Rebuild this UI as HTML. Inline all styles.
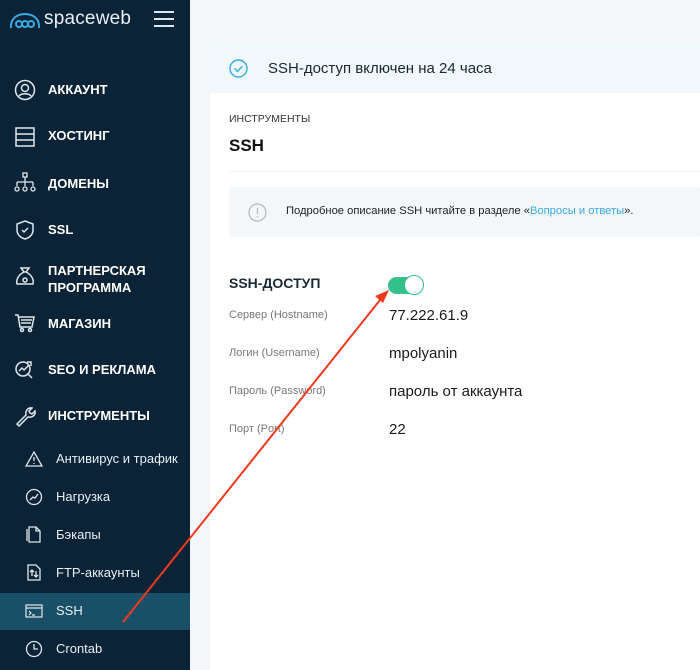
<!DOCTYPE html>
<html><head><meta charset="utf-8"><style>
*{margin:0;padding:0;box-sizing:border-box}
body{width:700px;height:670px;overflow:hidden;font-family:"Liberation Sans",sans-serif;background:#f3f7f9;position:relative}
#sb{position:absolute;left:0;top:0;width:190px;height:670px;background:#0b2336;color:#fff}
.logo{position:absolute;left:9px;top:8px;font-size:19px;color:#e8eef3;letter-spacing:0.2px}
.ham{position:absolute;left:154px;top:11px;width:20px}
.ham i{display:block;height:2px;background:#dfe6ec;margin-bottom:5px}
.it{position:absolute;left:48px;font-size:13px;font-weight:bold;line-height:17px}
.ic{position:absolute;left:14px;width:22px;height:22px}
.sub{position:absolute;left:56px;font-size:13px;color:#e8eef3}
.sic{position:absolute;left:25px;width:18px;height:18px}
#act{position:absolute;left:0;top:593px;width:190px;height:37px;background:#1a4f68}
#card{position:absolute;left:210px;top:44px;width:490px;height:626px;background:#fff}
#ban{position:absolute;left:0;top:0;width:490px;height:49px;background:#f0f8fc}
.t{position:absolute;white-space:nowrap}
</style></head><body>
<div id="sb">
<svg style="position:absolute;left:8px;top:12px" width="34" height="18" viewBox="0 0 34 18" fill="none" stroke="#3aa9e0" stroke-width="2"><path d="M3 16 C2 6 10 2 17 2 C24 2 32 6 31 16"/><circle cx="11" cy="12" r="3"/><circle cx="17" cy="12" r="3"/><circle cx="23" cy="12" r="3"/></svg>
<div class="logo" style="left:44px">spaceweb</div>
<div class="ham"><i></i><i></i><i></i></div>
<svg class="ic" style="top:79px" viewBox="0 0 22 22" fill="none" stroke="#dfe6ec" stroke-width="1.5"><circle cx="11" cy="11" r="9.5"/><circle cx="11" cy="9" r="3.5"/><path d="M5 17c2-3 10-3 12 0"/></svg>
<div class="it" style="top:81px">АККАУНТ</div>
<svg class="ic" style="top:126px" viewBox="0 0 22 22" fill="none" stroke="#dfe6ec" stroke-width="1.5"><rect x="2" y="2" width="18" height="18"/><path d="M2 8h18M2 14h18"/></svg>
<div class="it" style="top:127px">ХОСТИНГ</div>
<svg class="ic" style="top:172px" viewBox="0 0 22 22" fill="none" stroke="#dfe6ec" stroke-width="1.3"><rect x="9" y="1" width="4" height="4"/><path d="M11 5v5M3 10h16M3 10v4M11 10v4M19 10v4"/><circle cx="3" cy="17" r="2"/><circle cx="11" cy="17" r="2"/><circle cx="19" cy="17" r="2"/></svg>
<div class="it" style="top:175px">ДОМЕНЫ</div>
<svg class="ic" style="top:219px" viewBox="0 0 22 22" fill="none" stroke="#dfe6ec" stroke-width="1.5"><path d="M11 2l8 3v6c0 5-4 8-8 9-4-1-8-4-8-9V5z"/><path d="M8 11l2 2 4-4"/></svg>
<div class="it" style="top:221px">SSL</div>
<svg class="ic" style="top:266px" viewBox="0 0 22 22" fill="none" stroke="#dfe6ec" stroke-width="1.5"><path d="M7 2h8l-3 4h-2zM10 6C4 9 2 14 3 18h16c1-4-1-9-7-12"/><circle cx="11" cy="14" r="2"/></svg>
<div class="it" style="top:262px">ПАРТНЕРСКАЯ<br>ПРОГРАММА</div>
<svg class="ic" style="top:312px" viewBox="0 0 22 22" fill="none" stroke="#dfe6ec" stroke-width="1.5"><path d="M1 3h3l2 12h12l2-10H5M7 8h11M7 11h10"/><circle cx="8" cy="18" r="1.5"/><circle cx="16" cy="18" r="1.5"/></svg>
<div class="it" style="top:315px">МАГАЗИН</div>
<svg class="ic" style="top:358px" viewBox="0 0 22 22" fill="none" stroke="#dfe6ec" stroke-width="1.5"><circle cx="9" cy="11" r="7"/><path d="M14 16l4 4M5 13l3-3 2 2 5-5M13 4h4v4"/></svg>
<div class="it" style="top:361px">SEO И РЕКЛАМА</div>
<svg class="ic" style="top:405px" viewBox="0 0 22 22" fill="none" stroke="#dfe6ec" stroke-width="1.5"><path d="M3 19l9-9c-1-4 2-8 6-7l-3 3 1 2 2 1 3-3c1 4-3 7-7 6l-9 9z"/></svg>
<div class="it" style="top:407px">ИНСТРУМЕНТЫ</div>
<svg class="sic" style="top:450px" viewBox="0 0 18 18" fill="none" stroke="#dfe6ec" stroke-width="1.3"><path d="M9 2l8 14H1z M9 7v4M9 13v1"/></svg>
<div class="sub" style="top:451px">Антивирус и трафик</div>
<svg class="sic" style="top:488px" viewBox="0 0 18 18" fill="none" stroke="#dfe6ec" stroke-width="1.3"><circle cx="9" cy="9" r="7.5"/><path d="M5 12l3-3 2 1 3-4"/></svg>
<div class="sub" style="top:489px">Нагрузка</div>
<svg class="sic" style="top:525px" viewBox="0 0 18 18" fill="none" stroke="#dfe6ec" stroke-width="1.3"><path d="M4 2h7l4 4v11H4z M11 2v4h4M2 4v12"/></svg>
<div class="sub" style="top:527px">Бэкапы</div>
<svg class="sic" style="top:563px" viewBox="0 0 18 18" fill="none" stroke="#dfe6ec" stroke-width="1.3"><path d="M3 2h8l4 4v11H3z M7 13V7M5 9l2-2 2 2M11 8v6M9 12l2 2 2-2"/></svg>
<div class="sub" style="top:565px">FTP-аккаунты</div>
<div id="act"></div>
<svg class="sic" style="top:602px" viewBox="0 0 18 18" fill="none" stroke="#dfe6ec" stroke-width="1.2"><rect x="1" y="3" width="16" height="12"/><path d="M1 6h16M4 9l2 2-2 2M7 13h3"/></svg>
<div class="sub" style="top:603px">SSH</div>
<svg class="sic" style="top:640px" viewBox="0 0 18 18" fill="none" stroke="#dfe6ec" stroke-width="1.3"><circle cx="9" cy="9" r="7.5"/><path d="M9 4v5h4"/></svg>
<div class="sub" style="top:641px">Crontab</div>
</div>
<div id="card">
<div id="ban">
<svg style="position:absolute;left:19px;top:15px" width="19" height="19" viewBox="0 0 19 19" fill="none" stroke="#3aa9e0" stroke-width="1.4"><circle cx="9.5" cy="9.5" r="8.5"/><path d="M5.5 9.5l3 3 5-5.5"/></svg>
<div class="t" style="left:58px;top:16px;font-size:15px;color:#1c2630">SSH-доступ включен на 24 часа</div>
</div>
<div class="t" style="left:19px;top:69px;font-size:10.5px;color:#333">ИНСТРУМЕНТЫ</div>
<div class="t" style="left:19px;top:92px;font-size:17px;font-weight:bold;color:#111">SSH</div>
<div style="position:absolute;left:19px;top:127px;width:471px;height:1px;background:#eef2f5"></div>
<div style="position:absolute;left:19px;top:143px;width:471px;height:50px;background:#f3f7f9;border-radius:3px"></div>
<svg style="position:absolute;left:38px;top:159px" width="19" height="19" viewBox="0 0 19 19" fill="none" stroke="#b8bcc0" stroke-width="1.3"><circle cx="9.5" cy="9.5" r="8.5"/><path d="M9.5 5v6M9.5 13v1.5"/></svg>
<div class="t" style="left:76px;top:161px;font-size:11.2px;color:#222">Подробное описание SSH читайте в разделе «<span style="color:#3aa9e0">Вопросы и ответы</span>».</div>
<div class="t" style="left:19px;top:231px;font-size:14px;font-weight:bold;color:#1a2a36">SSH-ДОСТУП</div>
<div style="position:absolute;left:178px;top:233px;width:34px;height:17px;border-radius:9px;background:#34c08a"></div>
<div style="position:absolute;left:194px;top:231px;width:20px;height:20px;border-radius:50%;background:#fff;border:1.5px solid #34c08a"></div>
<div class="t" style="left:19px;top:265px;font-size:11px;color:#777">Сервер (Hostname)</div>
<div class="t" style="left:179px;top:263px;font-size:15px;color:#1a1a1a">77.222.61.9</div>
<div class="t" style="left:19px;top:303px;font-size:11px;color:#777">Логин (Username)</div>
<div class="t" style="left:179px;top:301px;font-size:15px;color:#1a1a1a">mpolyanin</div>
<div class="t" style="left:19px;top:341px;font-size:11px;color:#777">Пароль (Password)</div>
<div class="t" style="left:179px;top:339px;font-size:15px;color:#1a1a1a">пароль от аккаунта</div>
<div class="t" style="left:19px;top:379px;font-size:11px;color:#777">Порт (Port)</div>
<div class="t" style="left:179px;top:377px;font-size:15px;color:#1a1a1a">22</div>
</div>
<svg style="position:absolute;left:0;top:0" width="700" height="670"><path d="M123 622L380 300" stroke="#f03a1e" stroke-width="2"/><path d="M389 290l-14 6 8 7z" fill="#f03a1e"/></svg>
</body></html>
